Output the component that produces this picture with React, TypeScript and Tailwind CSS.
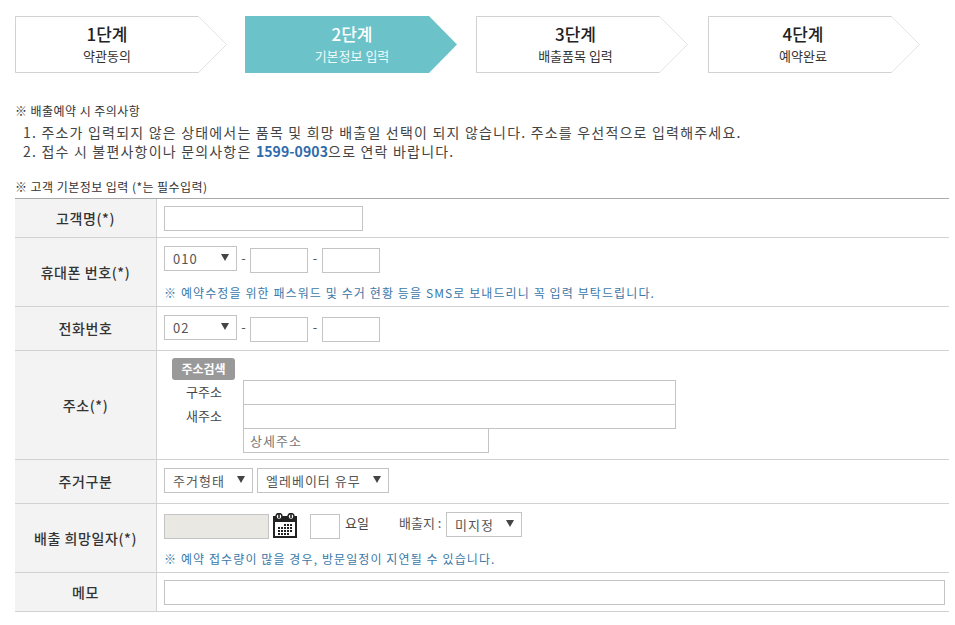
const font = "font-['Malgun_Gothic','Noto_Sans_CJK_KR','Noto_Sans',sans-serif]";

const steps = [
  { title: "1단계", sub: "약관동의", active: false, textWidth: "w-[184px]", gap: "mr-[18px]" },
  { title: "2단계", sub: "기본정보 입력", active: true, textWidth: "w-[214px]", gap: "mr-[19px]" },
  { title: "3단계", sub: "배출품목 입력", active: false, textWidth: "w-[199px]", gap: "mr-[20px]" },
  { title: "4단계", sub: "예약완료", active: false, textWidth: "w-[190px]", gap: "" },
];

type StepProps = { title: string; sub: string; active: boolean; textWidth: string; gap: string };

function Step({ title, sub, active, textWidth, gap }: StepProps) {
  return (
    <div className={`relative h-[57px] w-[212px] shrink-0 ${gap}`}>
      <svg className="absolute inset-0" width="212" height="57" viewBox="0 0 212 57">
        {active ? (
          <polygon points="0,0 184,0 212,28.5 184,57 0,57" fill="#6bc3c9" />
        ) : (
          <>
            <polygon points="0.5,0.5 183.5,0.5 211.5,28.5 183.5,56.5 0.5,56.5" fill="#fff" stroke="#e4e4e4" />
            <polyline points="183.5,0.5 0.5,0.5 0.5,56.5 183.5,56.5" fill="none" stroke="#d2d2d2" />
          </>
        )}
      </svg>
      <div className={`relative flex flex-col items-center pt-[5px] ${textWidth} ${active ? "text-white" : "text-[#222]"}`}>
        <div className="text-[17px] leading-[26px] font-medium">{title}</div>
        <div className={`-mt-px text-[13px] leading-[20px] ${active ? "text-[#eefafa]" : "text-[#333]"}`}>{sub}</div>
      </div>
    </div>
  );
}

function Select({ value, width, className = "" }: { value: string; width: string; className?: string }) {
  return (
    <div className={`relative h-[25px] shrink-0 ${width} ${className}`}>
      <select className="h-full w-full appearance-none rounded-none border border-[#c4c4c4] bg-white pl-2 text-[13px] tracking-[1px] text-[#555] outline-none">
        <option>{value}</option>
      </select>
      <span className="pointer-events-none absolute top-[9px] right-[8px] h-0 w-0 border-x-[4px] border-t-[7px] border-x-transparent border-t-[#444]" />
    </div>
  );
}

function Input({ className = "", placeholder }: { className?: string; placeholder?: string }) {
  return (
    <input
      placeholder={placeholder}
      className={`block h-[25px] shrink-0 border border-[#c4c4c4] bg-white px-1.5 text-[13px] outline-none placeholder:text-[#777] ${className}`}
    />
  );
}

function PhoneRow({ area }: { area: string }) {
  return (
    <div className="flex items-start">
      <Select value={area} width="w-[73px]" />
      <span className="mt-[3px] w-[13px] text-center text-[13px] leading-[20px] text-[#555]">-</span>
      <Input className="mt-[3px] w-[58px]" />
      <span className="mt-[3px] w-[14px] text-center text-[13px] leading-[20px] text-[#555]">-</span>
      <Input className="mt-[3px] w-[58px]" />
    </div>
  );
}

function Row({ label, height, children }: { label: string; height: string; children: React.ReactNode }) {
  return (
    <div className={`flex border-b border-[#d2d2d2] ${height}`}>
      <div className="flex w-[142px] shrink-0 items-center justify-center border-r border-[#d2d2d2] bg-[#f3f3f3] text-[14px] font-medium tracking-[0.6px] text-[#333]">
        {label}
      </div>
      <div className="min-w-0 flex-1 pl-[7px]">{children}</div>
    </div>
  );
}

function CalendarIcon() {
  return (
    <svg width="24" height="25" viewBox="0 0 24 25" className="shrink-0">
      <path d="M0 3h24v22H0z" fill="#222" />
      <rect x="2" y="9" width="20" height="14" fill="#fff" />
      <circle cx="6" cy="3.5" r="3" fill="#fff" stroke="#222" strokeWidth="1.5" />
      <circle cx="18" cy="3.5" r="3" fill="#fff" stroke="#222" strokeWidth="1.5" />
      <rect x="5.2" y="0" width="1.6" height="5" fill="#222" />
      <rect x="17.2" y="0" width="1.6" height="5" fill="#222" />
      {[11, 14, 17, 20].map((y) =>
        [5, 8, 11, 14, 17].map((x) =>
          (y === 11 && x < 11) || (y === 20 && x > 14) ? null : (
            <rect key={`${x}-${y}`} x={x} y={y} width="2" height="2" fill="#222" />
          ),
        ),
      )}
    </svg>
  );
}

export default function App() {
  return (
    <div className={`h-[625px] w-[955px] overflow-hidden bg-white pl-[15px] ${font}`}>
      <div className="flex pt-4">
        {steps.map((s) => (
          <Step key={s.title} {...s} />
        ))}
      </div>

      <p className="mt-[29px] text-[12px] leading-[18px] tracking-[0.45px] text-[#333]">※ 배출예약 시 주의사항</p>
      <ol className="mt-[2px] pl-2 text-[14px] leading-[20px] tracking-[1.2px] text-[#444]">
        <li>1. 주소가 입력되지 않은 상태에서는 품목 및 희망 배출일 선택이 되지 않습니다. 주소를 우선적으로 입력해주세요.</li>
        <li className="-mt-px">
          2. 접수 시 불편사항이나 문의사항은 <b className="font-bold tracking-[0.1px] text-[#2f6bab]">1599-0903</b>으로 연락 바랍니다.
        </li>
      </ol>

      <p className="mt-[17px] text-[12px] leading-[18px] tracking-[0.45px] text-[#333]">※ 고객 기본정보 입력 (*는 필수입력)</p>

      <div className="mt-[2px] w-[934px] border-t border-[#aaa]">
        <Row label="고객명(*)" height="h-[39px]">
          <div className="pt-[7px]">
            <Input className="w-[199px]" />
          </div>
        </Row>
        <Row label="휴대폰 번호(*)" height="h-[69px]">
          <div className="pt-[7px]">
            <PhoneRow area="010" />
            <p className="mt-[11px] text-[12px] leading-[18px] tracking-[1.1px] text-[#3a78a8]">
              ※ 예약수정을 위한 패스워드 및 수거 현황 등을 SMS로 보내드리니 꼭 입력 부탁드립니다.
            </p>
          </div>
        </Row>
        <Row label="전화번호" height="h-[44px]">
          <div className="pt-[7px]">
            <PhoneRow area="02" />
          </div>
        </Row>
        <Row label="주소(*)" height="h-[109px]">
          <div className="flex pt-[7px]">
            <div className="w-[79px] shrink-0">
              <button className="ml-2 block h-[22px] w-[63px] rounded-[3px] bg-[#999] text-[12px] font-bold text-white">
                주소검색
              </button>
              <div className="pl-[1px] text-center text-[13px] leading-[24px] text-[#444]">구주소</div>
              <div className="pl-[1px] text-center text-[13px] leading-[24px] text-[#444]">새주소</div>
            </div>
            <div className="pt-[22px]">
              <Input className="w-[433px]" />
              <Input className="-mt-px w-[433px]" />
              <Input className="-mt-px w-[246px] tracking-[1px]" placeholder="상세주소" />
            </div>
          </div>
        </Row>
        <Row label="주거구분" height="h-[44px]">
          <div className="flex gap-1 pt-[7px]">
            <Select value="주거형태" width="w-[89px]" />
            <Select value="엘레베이터 유무" width="w-[132px]" />
          </div>
        </Row>
        <Row label="배출 희망일자(*)" height="h-[69px]">
          <div className="pt-[7px]">
            <div className="flex items-start">
              <Input className="mt-[3px] w-[105px] !bg-[#e9e8e3]" />
              <div className="mt-[2px] ml-1">
                <CalendarIcon />
              </div>
              <Input className="mt-[3px] ml-[13px] w-[30px]" />
              <span className="mt-[2px] ml-[5px] w-[54px] text-[13px] leading-[20px] text-[#444]">요일</span>
              <span className="mt-[2px] w-[47px] text-[13px] leading-[20px] text-[#555]">배출지 :</span>
              <Select value="미지정" width="w-[76px]" />
            </div>
            <p className="mt-[11px] text-[12px] leading-[18px] tracking-[1.1px] text-[#3a78a8]">
              ※ 예약 접수량이 많을 경우, 방문일정이 지연될 수 있습니다.
            </p>
          </div>
        </Row>
        <Row label="메모" height="h-[39px]">
          <div className="pt-[7px]">
            <Input className="w-[781px]" />
          </div>
        </Row>
      </div>
    </div>
  );
}
